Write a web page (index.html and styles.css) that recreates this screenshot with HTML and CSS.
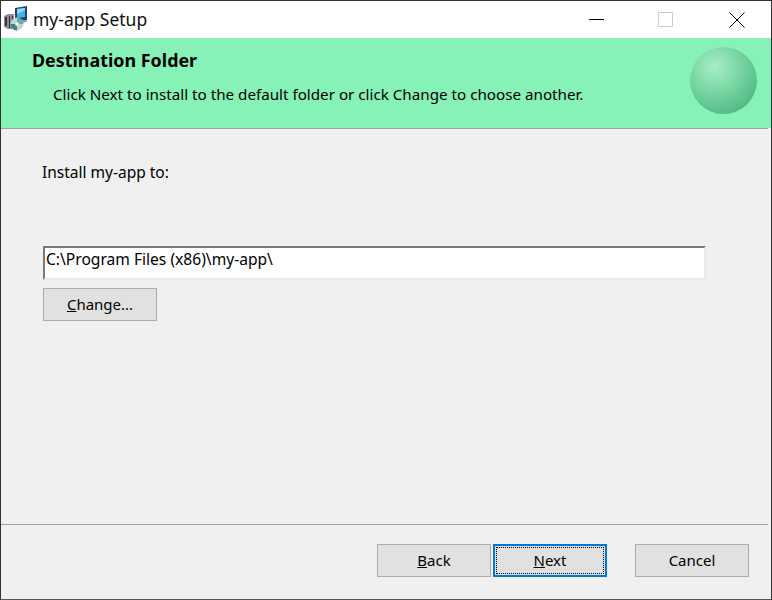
FILE: index.html
```html
<!DOCTYPE html>
<html lang="en">
<head>
  <meta charset="UTF-8">
  <meta name="viewport" content="width=device-width, initial-scale=1.0">
  <title>my-app Setup</title>
  <link rel="stylesheet" href="styles.css">
</head>
<body>
  <div class="window">
    <div class="titlebar">
      <svg class="app-icon" width="24" height="26" viewBox="0 0 24 26">
        <path d="M0 11l4-2h6v15H4l-4-2z" fill="#8a8f96"/>
        <path d="M1 12h2v9H1zM5 11h1v12H5zM8 11h1v12H8z" fill="#34373c"/>
        <path d="M11 3l12-2v14l-12 1z" fill="#23406e"/>
        <path d="M13 4l8-1v9l-8 1z" fill="#3fb2e8"/>
        <path d="M13 4l8-1v2l-8 4z" fill="#8adcf7"/>
        <path d="M12 16l10-1 1 2-10 1z" fill="#8b93a0"/>
        <circle cx="13" cy="19" r="6.5" fill="#c9d3cf"/>
        <path d="M13 12.5a6.500 6.500 0 0 1 6.500 6.500h-4.500a2 2 0 0 0-2-2z" fill="#58b6a0"/>
        <path d="M6.500 19a6.500 6.500 0 0 0 6.500 6.500v-4.500a2 2 0 0 1-2-2z" fill="#3f7f8f"/>
        <circle cx="13" cy="19" r="1.500" fill="#fff"/>
      </svg>
      <span class="title">my-app Setup</span>
      <div class="controls">
        <svg width="16" height="16" viewBox="0 0 16 16"><path d="M0 7.500h15" stroke="#000" fill="none"/></svg>
        <svg class="maximize" width="16" height="16" viewBox="0 0 16 16"><rect x="0.500" y="0.500" width="14" height="14" stroke="#ccc" fill="none"/></svg>
        <svg width="16" height="16" viewBox="0 0 16 16"><path d="M0.500 0.500l15 15M15.500 0.500l-15 15" stroke="#000" fill="none"/></svg>
      </div>
    </div>

    <div class="banner">
      <div class="banner-text">
        <div class="heading">Destination Folder</div>
        <div class="subheading">Click Next to install to the default folder or click Change to choose another.</div>
      </div>
      <div class="sphere"></div>
    </div>
    <div class="banner-line"></div>

    <div class="content">
      <p class="label">Install my-app to:</p>
      <div class="path-input">C:\Program Files (x86)\my-app\</div>
      <button class="btn btn-change"><u>C</u>hange...</button>
    </div>

    <div class="footer">
      <button class="btn"><u>B</u>ack</button>
      <button class="btn btn-default"><span class="focus-ring"><u>N</u>ext</span></button>
      <button class="btn btn-cancel">Cancel</button>
    </div>
  </div>
</body>
</html>
```

FILE: styles.css
```css
html, body {
  margin: 0;
  height: 100%;
}
body {
  font-family: "Noto Sans", "Open Sans", sans-serif;
  font-size: 15.5px;
  color: #000;
  background-color: #f0f0f0;
}
.window {
  display: flex;
  flex-direction: column;
  box-sizing: border-box;
  width: 772px;
  height: 600px;
  border: 1px solid #333;
  border-bottom-color: #555;
  background-color: #f0f0f0;
}
.titlebar {
  display: flex;
  align-items: center;
  height: 37px;
  padding-left: 3px;
  background-color: #fff;
}
.app-icon {
  margin-right: 5px;
  margin-top: -3px;
}
.title {
  margin-bottom: 2px;
  font-size: 17.5px;
  color: #111;
}
.controls {
  display: flex;
  gap: 54px;
  margin-left: auto;
  margin-right: 26px;
}
.maximize {
  margin-left: -1px;
  margin-right: 1px;
}
.banner {
  display: flex;
  justify-content: space-between;
  height: 90px;
  background-color: #87f2b8;
}
.banner-line {
  height: 1px;
  margin-right: 3px;
  background-color: #a0a0a0;
}
.banner-text {
  padding: 11px 0 0 31px;
}
.heading {
  font-weight: bold;
  font-size: 17.9px;
  line-height: 22px;
}
.subheading {
  margin-top: 12px;
  margin-left: 21px;
  font-size: 15.2px;
  line-height: 22px;
}
.sphere {
  width: 67px;
  height: 67px;
  margin: 9px 14px 0 0;
  border-radius: 50%;
  background: radial-gradient(circle at 37% 30%, #a8eec6 0%, #84dcab 30%, #5fc48f 65%, #3fa873 100%);
}
.content {
  flex: 1;
  padding: 0 65px 0 42px;
}
.label {
  margin: 32px 0 0;
  margin-left: -1px;
  line-height: 22px;
}
.path-input {
  box-sizing: border-box;
  height: 34px;
  margin: 63px 0 0 0;
  padding-left: 1px;
  font-size: 15.6px;
  line-height: 22px;
  border: 2px solid;
  border-color: #7a7a7a #e8e8e8 #e8e8e8 #7a7a7a;
  background-color: #fff;
}
.btn {
  box-sizing: border-box;
  width: 114px;
  height: 33px;
  padding: 0 0 2px;
  font: inherit;
  font-size: 15px;
  color: #000;
  border: 1px solid #adadad;
  background-color: #e1e1e1;
}
.btn-change {
  display: block;
  margin-top: 8px;
}
.footer {
  display: flex;
  align-items: flex-start;
  height: 75px;
  padding: 19px 0 0 376px;
  box-sizing: border-box;
  border-top: 1px solid #a0a0a0;
  margin-right: 3px;
}
.btn-default {
  margin-left: 2px;
  padding: 1px;
  border: 2px solid #0078d7;
}
.focus-ring {
  display: block;
  height: 100%;
  box-sizing: border-box;
  line-height: 25px;
  border: 1px dotted #000;
}
.btn-cancel {
  margin-left: 28px;
}
```
